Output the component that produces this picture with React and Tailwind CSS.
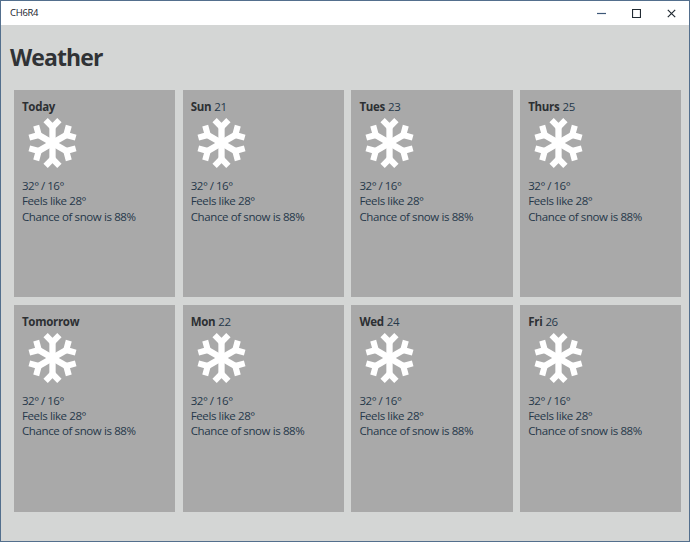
const days = [
  { name: 'Today' },
  { name: 'Sun', date: '21' },
  { name: 'Tues', date: '23' },
  { name: 'Thurs', date: '25' },
  { name: 'Tomorrow' },
  { name: 'Mon', date: '22' },
  { name: 'Wed', date: '24' },
  { name: 'Fri', date: '26' },
];

function Snowflake() {
  return (
    <svg viewBox="-26.5 -26 52 52" className="ml-1 block size-[52px]" fill="none" stroke="#fff">
      {[0, 60, 120, 180, 240, 300].map((angle) => (
        <g key={angle} transform={`rotate(${angle})`}>
          <path d="M0 0V-17" strokeWidth="6.3" />
          <path d="M-6.9 -22.8L0 -15.9L6.9 -22.8" strokeWidth="6.1" />
        </g>
      ))}
    </svg>
  );
}

function DayCard({ name, date }) {
  return (
    <section className="bg-[#a9a9a9] pl-2 pt-[9px] text-[11.5px] leading-[15.2px] tracking-[-0.39px] text-[#26384a]">
      <h2 className="whitespace-nowrap">
        <span className="font-bold tracking-[-0.3px] text-[#2d3033]">{name}</span>
        {date && <span className="ml-[0.4px]"> {date}</span>}
      </h2>
      <div className="pt-[3px] pb-[9px]">
        <Snowflake />
      </div>
      <p className="tracking-[-0.5px]">32° / 16°</p>
      <p>Feels like 28°</p>
      <p className="whitespace-nowrap">Chance of snow is 88%</p>
    </section>
  );
}

function TitleBar() {
  return (
    <header className="flex h-6 items-center justify-between bg-white pl-[9px] pr-[13px]">
      <span className="text-[9.5px] tracking-[-0.3px] text-[#18222c]">CH6R4</span>
      <div className="flex items-center gap-[26px]">
        <svg className="size-[9px]" viewBox="0 0 9 9" stroke="#3d5878" strokeWidth="1.2">
          <path d="M0 4.5H9" />
        </svg>
        <svg className="size-[9px]" viewBox="0 0 9 9" fill="none" stroke="#222b33" strokeWidth="1.1">
          <path d="M.55 .55H8.45V8.45H.55Z" />
        </svg>
        <svg className="size-[9px]" viewBox="0 0 9 9" stroke="#222b33" strokeWidth="1.2">
          <path d="M.8 .8L8.2 8.2M8.2 .8L.8 8.2" />
        </svg>
      </div>
    </header>
  );
}

export default function App() {
  return (
    <div className="flex h-[542px] w-[690px] flex-col border border-[#536f8d] bg-[#d4d6d5] font-['Open_Sans','Noto_Sans',sans-serif]">
      <TitleBar />
      <main className="flex flex-col">
        <h1 className="ml-[9px] mt-[15px] h-[50px] text-[23px] font-bold leading-[34px] tracking-[-0.9px] text-[#303336]">Weather</h1>
        <div className="ml-[13px] grid w-[667.4px] grid-cols-4 grid-rows-[207px_207px] gap-x-[7.6px] gap-y-[7.5px]">
          {days.map((day) => (
            <DayCard key={day.name} {...day} />
          ))}
        </div>
      </main>
    </div>
  );
}
